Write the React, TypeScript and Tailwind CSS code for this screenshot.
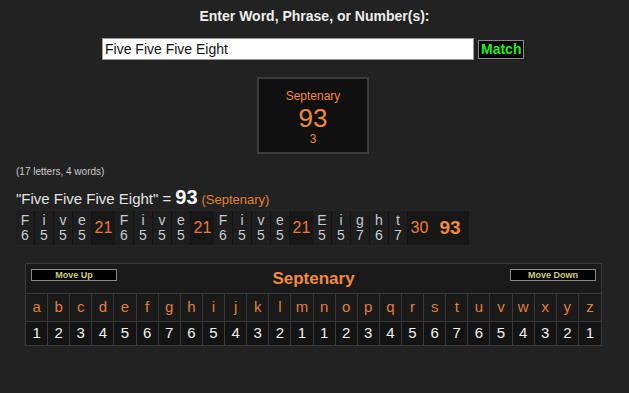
import React from 'react';

const words = [
  { word: 'Five', vals: [6, 5, 5, 5] },
  { word: 'Five', vals: [6, 5, 5, 5] },
  { word: 'Five', vals: [6, 5, 5, 5] },
  { word: 'Eight', vals: [5, 5, 7, 6, 7] },
];

const alphabet = 'abcdefghijklmnopqrstuvwxyz'.split('');
const septenary = [1, 2, 3, 4, 5, 6, 7, 6, 5, 4, 3, 2, 1, 1, 2, 3, 4, 5, 6, 7, 6, 5, 4, 3, 2, 1];

export default function App() {
  const total = words.reduce((s, w) => s + w.vals.reduce((a, b) => a + b, 0), 0);

  return (
    <div
      className="w-[629px] h-[393px] bg-[#222222] text-[#dddddd] overflow-hidden"
      style={{ fontFamily: '"Liberation Sans", Arial, sans-serif' }}
    >
      <div className="pt-[8px] text-center text-[14px] leading-[16px] font-bold text-[#eeeeee]">
        Enter Word, Phrase, or Number(s):
      </div>

      <div className="mt-[14px] flex items-center pl-[102px] gap-[4px]">
        <div className="w-[372px] h-[22px] bg-white border border-[#999] flex items-center px-[2px] text-[14px] text-[#111]">
          Five Five Five Eight
        </div>
        <div className="h-[19px] px-[2px] bg-black border border-[#888] text-[#22ee22] text-[14px] leading-[17px] font-bold">
          Match
        </div>
      </div>

      <div className="mt-[17px] flex justify-center">
        <div className="w-[112px] h-[77px] ml-[-3px] bg-[#101010] border-2 border-[#3c3c3c] flex flex-col items-center pt-[10px] text-[#ee8a3c]">
          <div className="text-[12px] leading-[14px]">Septenary</div>
          <div className="text-[26px] leading-[28px] mt-[1px]">93</div>
          <div className="text-[12px] leading-[14px]">3</div>
        </div>
      </div>

      <div className="mt-[12px] pl-[16px] text-[10px] leading-[12px] text-[#cccccc]">
        (17 letters, 4 words)
      </div>

      <div className="mt-[9px] pl-[16px] text-[15px] leading-[20px] flex items-baseline gap-[4px]">
        <span className="text-[#e4e4e4]">"Five Five Five Eight" =</span>
        <span className="text-[20px] font-bold text-white">{total}</span>
        <span className="text-[13px] text-[#e08238]">(Septenary)</span>
      </div>

      <div className="mt-[1px] ml-[16px] flex h-[34px] w-fit bg-[#1a1a1a]">
        {words.map((w, i) => (
          <React.Fragment key={i}>
            {w.word.split('').map((ch, j) => (
              <div
                key={j}
                className="w-[19px] flex flex-col items-center justify-center bg-[#1e1e1e] border-r border-[#141414] text-[#c4ccd4] text-[14px] leading-[15px]"
              >
                <span>{ch}</span>
                <span>{w.vals[j]}</span>
              </div>
            ))}
            <div className="w-[23px] flex items-center justify-center bg-[#171717] text-[#ee7a32] text-[16px]">
              {w.vals.reduce((a, b) => a + b, 0)}
            </div>
          </React.Fragment>
        ))}
        <div className="w-[38px] flex items-center justify-center bg-[#171717] text-[#f08a3c] text-[19px] font-bold">
          {total}
        </div>
      </div>

      <div className="mt-[18px] ml-[25px] w-[577px] bg-[#1a1a1a] border border-[#3a3a3a]">
        <div className="h-[29px] flex items-start justify-between px-[5px] pt-[5px] relative">
          <div className="w-[86px] h-[12px] bg-black border border-[#888] text-[9px] leading-[10px] font-bold text-[#cfcf78] text-center">
            Move Up
          </div>
          <div className="absolute left-0 right-0 top-[5px] text-center text-[17px] leading-[20px] font-bold text-[#f08a3c]">
            Septenary
          </div>
          <div className="w-[86px] h-[12px] bg-black border border-[#888] text-[9px] leading-[10px] font-bold text-[#cfcf78] text-center">
            Move Down
          </div>
        </div>
        <div className="grid grid-cols-[repeat(26,1fr)] border-t border-[#3a3a3a]">
          {alphabet.map((c, i) => (
            <div
              key={c}
              className={`h-[27px] flex items-center justify-center text-[15px] text-[#e0803a] ${i < 25 ? 'border-r border-[#3a3a3a]' : ''}`}
            >
              {c}
            </div>
          ))}
        </div>
        <div className="grid grid-cols-[repeat(26,1fr)] border-t border-[#3a3a3a]">
          {septenary.map((n, i) => (
            <div
              key={i}
              className={`h-[23px] flex items-center justify-center text-[15px] text-[#f0f0f0] bg-[#141414] ${i < 25 ? 'border-r border-[#3a3a3a]' : ''}`}
            >
              {n}
            </div>
          ))}
        </div>
      </div>
    </div>
  );
}
